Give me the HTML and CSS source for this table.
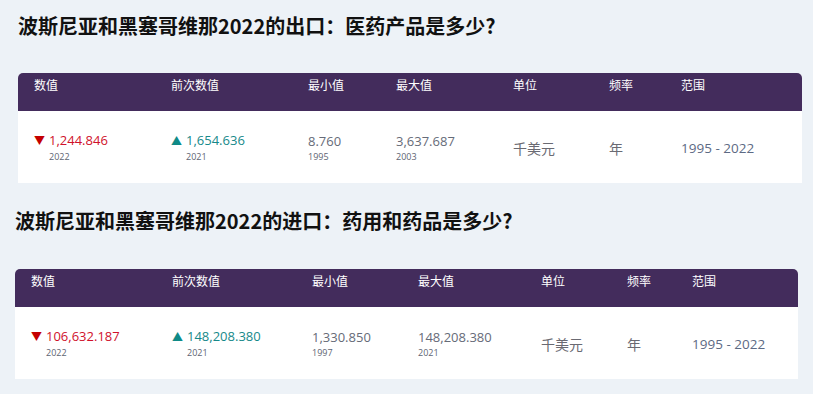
FILE: index.html
```html
<!DOCTYPE html>
<html lang="zh">
<head>
<meta charset="utf-8">
<link rel="stylesheet" href="styles.css">
</head>
<body>
<section class="block block-a">
  <h2 class="title">波斯尼亚和黑塞哥维那2022的出口：医药产品是多少?</h2>
  <div class="stats cols-a">
    <div class="head">数值</div>
    <div class="head">前次数值</div>
    <div class="head">最小值</div>
    <div class="head">最大值</div>
    <div class="head">单位</div>
    <div class="head">频率</div>
    <div class="head">范围</div>
    <div class="cell"><div class="val down"><span class="tri">▼</span>1,244.846</div><div class="yr">2022</div></div>
    <div class="cell"><div class="val up"><span class="tri">▲</span>1,654.636</div><div class="yr">2021</div></div>
    <div class="cell"><div class="val">8.760</div><div class="yr yr-plain">1995</div></div>
    <div class="cell"><div class="val">3,637.687</div><div class="yr yr-plain">2003</div></div>
    <div class="cell"><span class="txt">千美元</span></div>
    <div class="cell"><span class="txt">年</span></div>
    <div class="cell"><span class="range">1995 - 2022</span></div>
  </div>
</section>
<section class="block block-b">
  <h2 class="title">波斯尼亚和黑塞哥维那2022的进口：药用和药品是多少?</h2>
  <div class="stats cols-b">
    <div class="head">数值</div>
    <div class="head">前次数值</div>
    <div class="head">最小值</div>
    <div class="head">最大值</div>
    <div class="head">单位</div>
    <div class="head">频率</div>
    <div class="head">范围</div>
    <div class="cell"><div class="val down"><span class="tri">▼</span>106,632.187</div><div class="yr">2022</div></div>
    <div class="cell"><div class="val up"><span class="tri">▲</span>148,208.380</div><div class="yr">2021</div></div>
    <div class="cell"><div class="val">1,330.850</div><div class="yr yr-plain">1997</div></div>
    <div class="cell"><div class="val">148,208.380</div><div class="yr yr-plain">2021</div></div>
    <div class="cell"><span class="txt">千美元</span></div>
    <div class="cell"><span class="txt">年</span></div>
    <div class="cell"><span class="range">1995 - 2022</span></div>
  </div>
</section>
</body>
</html>
```
FILE: styles.css
```css
html, body {
  margin: 0;
  padding: 0;
  background: #edf2f7;
  font-family: "Open Sans", "Noto Sans", "Noto Sans CJK SC", sans-serif;
}

.block-a {
  padding: 12px 11px 0 18px;
}

.block-b {
  padding: 24px 15px 0 15px;
}

.title {
  margin: 0 0 33px 0;
  font-family: "Noto Sans CJK SC", sans-serif;
  font-weight: 700;
  font-size: 20px;
  line-height: 28px;
  color: #111;
}

.block-b .title {
  margin-bottom: 34px;
}

.stats {
  display: grid;
  background: #fff;
  border-radius: 5px 5px 0 0;
  overflow: hidden;
}

.cols-a {
  grid-template-columns: 137px 137px 88px 117px 96px 72px 1fr;
}

.cols-b {
  grid-template-columns: 141px 140px 106px 123px 86px 65px 1fr;
}

.head {
  background: #432c5c;
  color: #fff;
  height: 38px;
  box-sizing: border-box;
  padding: 4px 0 0 16px;
  font-family: "Noto Sans CJK SC", sans-serif;
  font-size: 12px;
  line-height: 16px;
}

.cell {
  height: 72px;
  box-sizing: border-box;
  padding-left: 16px;
  display: flex;
  flex-direction: column;
  justify-content: center;
}

.val {
  font-size: 13px;
  line-height: 18px;
  color: #666b78;
  white-space: nowrap;
}

.val.down {
  color: #d0112b;
}

.val.up {
  color: #16898a;
}

.tri {
  display: inline-block;
  width: 15px;
  font-size: 11px;
}

.down .tri {
  color: #c40000;
}

.up .tri {
  color: #0f8a87;
}

.yr {
  font-size: 9px;
  line-height: 12px;
  color: #5e6472;
  padding-left: 15px;
  margin-top: 1px;
}

.yr-plain {
  padding-left: 0;
}

.txt {
  font-family: "Noto Sans CJK SC", sans-serif;
  font-size: 14px;
  color: #6a6a72;
  margin-top: 2px;
}

.range {
  font-size: 13.5px;
  color: #5d6a84;
  margin-top: 2px;
}
```
